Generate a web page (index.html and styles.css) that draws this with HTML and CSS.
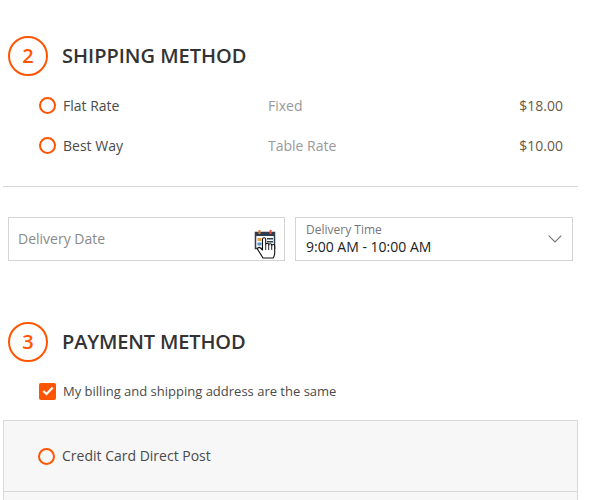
FILE: index.html
```html
<!DOCTYPE html>
<html lang="en">
<head>
<meta charset="utf-8">
<title>Checkout</title>
<link rel="stylesheet" href="styles.css">
</head>
<body>
<section class="shipping">
  <h2 class="step-title"><span class="step-num">2</span>SHIPPING METHOD</h2>
  <div class="rate"><span class="radio"></span><span class="rate-name">Flat Rate</span><span class="rate-type">Fixed</span><span class="rate-price">$18.00</span></div>
  <div class="rate"><span class="radio"></span><span class="rate-name">Best Way</span><span class="rate-type">Table Rate</span><span class="rate-price">$10.00</span></div>
</section>
<hr class="divider">
<div class="delivery">
  <div class="field date-field">
    <span class="placeholder">Delivery Date</span>
    <svg class="cal" width="22" height="30" viewBox="0 0 22 30">
      <rect x="1.500" y="3.500" width="19" height="16" fill="#fff" stroke="#2c3e50" stroke-width="1.500"/>
      <rect x="1" y="3" width="20" height="4" fill="#2c3e50"/>
      <rect x="4.500" y="1" width="2" height="4" fill="#e67e22"/>
      <rect x="15.500" y="1" width="2" height="4" fill="#e74c3c"/>
      <rect x="3.500" y="9" width="4" height="3" fill="#e6a23c"/>
      <rect x="3.500" y="13.500" width="4" height="3" fill="#5d8fc4"/>
      <path d="M13 9h6v1.500h-6zM13 12h6v1.500h-6z" fill="#2c3e50"/>
      <path d="M9 29 4 21c-1.300-2 1-3.400 2.500-2L8.500 21V10.500c0-2.300 3.200-2.300 3.200 0V15.500c0-1.700 3-1.700 3 0v.5c0-1.700 3-1.700 3 0v.7c0-1.600 3-1.600 3 0V24c0 2-.7 3.500-1.500 5z" fill="#fff" stroke="#111" stroke-width="1.100" stroke-linejoin="round"/>
      <path d="M11.700 16v5M14.700 16v5M17.700 16.500v4.500" stroke="#111" stroke-width=".9" fill="none"/>
    </svg>
  </div>
  <div class="field time-field">
    <div class="time-text"><span class="time-label">Delivery Time</span><span class="time-value">9:00 AM - 10:00 AM</span></div>
    <svg class="chev" width="14" height="8" viewBox="0 0 14 8"><path d="M.7.700 7 7l6.300-6.300" fill="none" stroke="#757575" stroke-width="1.100"/></svg>
  </div>
</div>
<section class="payment">
  <h2 class="step-title pay-title"><span class="step-num">3</span>PAYMENT METHOD</h2>
  <div class="same">
    <span class="check"><svg width="12" height="10" viewBox="0 0 12 10"><path d="M1.300 5 4.500 8 10.700 1.500" fill="none" stroke="#fff" stroke-width="2.200"/></svg></span>
    <span>My billing and shipping address are the same</span>
  </div>
  <div class="pay-box">
    <div class="pay-row"><span class="radio"></span><span class="pay-label">Credit Card Direct Post</span></div>
  </div>
</section>
</body>
</html>
```

FILE: styles.css
```css
* { box-sizing: border-box; }
html, body { margin: 0; padding: 0; }
body { width: 594px; height: 500px; overflow: hidden; background: #fff; font-family: "Open Sans", sans-serif; font-size: 14px; color: #4a4a4a; }
.shipping { padding: 36px 0 0 8px; }
.step-title { display: flex; align-items: center; gap: 14px; margin: 0; height: 40px; font-size: 20px; line-height: 40px; font-weight: 600; color: #333; }
.pay-title { letter-spacing: -.14px; }
.step-num { width: 40px; height: 40px; border: 2px solid #ff5501; border-radius: 50%; display: flex; align-items: center; justify-content: center; color: #ff5501; font-size: 20px; font-weight: 600; letter-spacing: 0; }
.rate { display: flex; align-items: center; height: 40px; padding-left: 31px; width: 555px; }
.rate:first-of-type { margin-top: 9px; }
.radio { width: 17px; height: 17px; border: 2px solid #ff5501; border-radius: 50%; flex: none; margin-right: 7px; }
.rate-name { width: 205px; }
.rate-type { flex: 1; color: #999; }
.rate-price { color: #6b5a45; }
.divider { border: 0; border-top: 1px solid #d9d9d9; margin: 21px 0 0 3px; width: 575px; }
.delivery { display: flex; gap: 10px; padding: 30px 0 0 8px; }
.field { height: 44px; border: 1px solid #d4d4d4; display: flex; align-items: center; justify-content: space-between; padding-bottom: 2px; }
.date-field { width: 277px; padding-left: 9px; padding-right: 8px; }
.placeholder { color: #8a8a8a; }
.cal { margin-top: 12px; }
.time-field { width: 278px; padding-left: 10px; padding-right: 10px; }
.time-text { display: flex; flex-direction: column; margin-top: 1px; }
.time-label { font-size: 12px; line-height: 16px; color: #777; }
.time-value { font-size: 14px; line-height: 18px; color: #222; }
.chev { margin-top: 2px; }
.payment { padding: 61px 0 0 8px; }
.same { display: flex; align-items: center; gap: 7px; margin: 17px 0 0 31px; height: 24px; font-size: 13px; }
.check { width: 17px; height: 17px; background: #ff5501; border-radius: 2px; display: flex; align-items: center; justify-content: center; }
.pay-box { margin: 17px 0 0 -5px; width: 575px; height: 100px; background: #f7f7f7; border: 1px solid #d9d9d9; }
.pay-row { display: flex; align-items: center; height: 71px; padding-left: 34px; border-bottom: 1px solid #d9d9d9; }
.pay-label { margin-bottom: 2px; }
```
